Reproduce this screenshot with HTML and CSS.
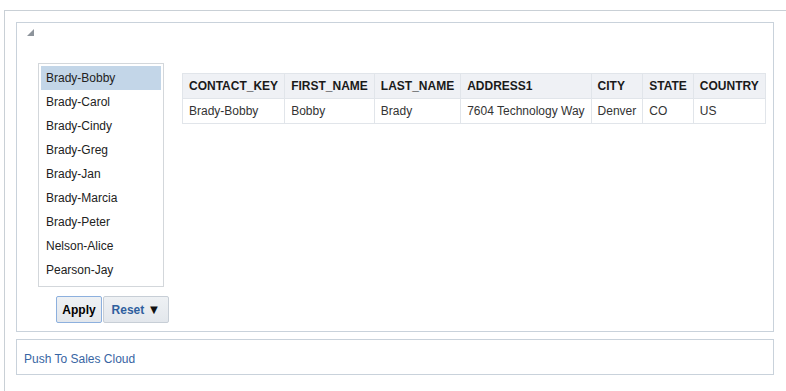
FILE: index.html
```html
<!DOCTYPE html>
<html lang="en">
<head>
    <meta charset="UTF-8">
    <title>Contacts</title>
    <link rel="stylesheet" href="styles.css">
</head>
<body>
    <div class="frame">
        <!-- Selection panel -->
        <div class="panel">
            <div class="collapse">
                <svg width="8" height="8" viewBox="0 0 8 8"><polygon points="7,0 7,7 0,7" fill="#8d949b"/></svg>
            </div>
            <div class="panel-body">
                <div class="picker">
                    <ul class="list-box">
                        <li class="selected">Brady-Bobby</li>
                        <li>Brady-Carol</li>
                        <li>Brady-Cindy</li>
                        <li>Brady-Greg</li>
                        <li>Brady-Jan</li>
                        <li>Brady-Marcia</li>
                        <li>Brady-Peter</li>
                        <li>Nelson-Alice</li>
                        <li>Pearson-Jay</li>
                    </ul>
                    <div class="actions">
                        <button class="btn btn-apply">Apply</button>
                        <button class="btn btn-reset">Reset <span class="caret">&#9660;</span></button>
                    </div>
                </div>
                <table class="grid">
                    <tr>
                        <th>CONTACT_KEY</th>
                        <th>FIRST_NAME</th>
                        <th>LAST_NAME</th>
                        <th>ADDRESS1</th>
                        <th>CITY</th>
                        <th>STATE</th>
                        <th>COUNTRY</th>
                    </tr>
                    <tr>
                        <td>Brady-Bobby</td>
                        <td>Bobby</td>
                        <td>Brady</td>
                        <td>7604 Technology Way</td>
                        <td>Denver</td>
                        <td>CO</td>
                        <td>US</td>
                    </tr>
                </table>
            </div>
        </div>

        <!-- Action panel -->
        <div class="panel panel-link">
            <a class="link">Push To Sales Cloud</a>
        </div>
    </div>
</body>
</html>
```

FILE: styles.css
```css
* {
    margin: 0;
    padding: 0;
    box-sizing: border-box;
    font-family: 'Liberation Sans', Arial, sans-serif;
}
body {
    background: #fff;
    padding: 10px 0 0 4px;
    font-size: 12px;
    color: #333;
}
.frame {
    border-top: 1px solid #c9d0d6;
    border-left: 1px solid #c9d0d6;
    height: 381px;
    padding: 11px 0 0 11px;
}
.panel {
    width: 758px;
    height: 310px;
    border: 1px solid #c9d2db;
}
.collapse {
    height: 40px;
    padding: 6px 0 0 10px;
}
.collapse svg {
    display: block;
}
.panel-body {
    display: flex;
    align-items: flex-start;
    padding-left: 21px;
}
.picker {
    width: 126px;
    flex-shrink: 0;
}
.list-box {
    list-style: none;
    width: 126px;
    height: 224px;
    border: 1px solid #d3d7db;
    padding: 2px;
}
.list-box li {
    height: 24px;
    line-height: 24px;
    padding-left: 5px;
    color: #222;
}
.list-box .selected {
    background-color: #c3d6e8;
}
.actions {
    display: flex;
    gap: 1px;
    margin: 9px 0 0 18px;
    width: 120px;
}
.btn {
    flex-shrink: 0;
    height: 27px;
    border: 1px solid #c7ced6;
    border-radius: 2px;
    background: linear-gradient(#eef1f4, #e3e7ec);
    font-size: 12px;
    font-weight: bold;
    cursor: pointer;
}
.btn-apply {
    width: 46px;
    color: #000;
    border-color: #8db0de;
}
.btn-reset {
    width: 66px;
    color: #2f5f9e;
}
.caret {
    color: #111;
    font-size: 13px;
}
.grid {
    border-collapse: collapse;
    margin: 10px 0 0 18px;
    border: 1px solid #dde2e7;
}
.grid th,
.grid td {
    height: 25px;
    padding: 0 6px;
    border: 1px solid #e1e5ea;
    text-align: left;
    white-space: nowrap;
}
.grid th {
    background-color: #eff1f5;
    color: #1a1a1a;
    font-weight: bold;
}
.grid td {
    color: #333;
}
.panel-link {
    height: 36px;
    margin-top: 7px;
    padding: 12px 0 0 7px;
}
.link {
    color: #3765a3;
    cursor: pointer;
}
```
